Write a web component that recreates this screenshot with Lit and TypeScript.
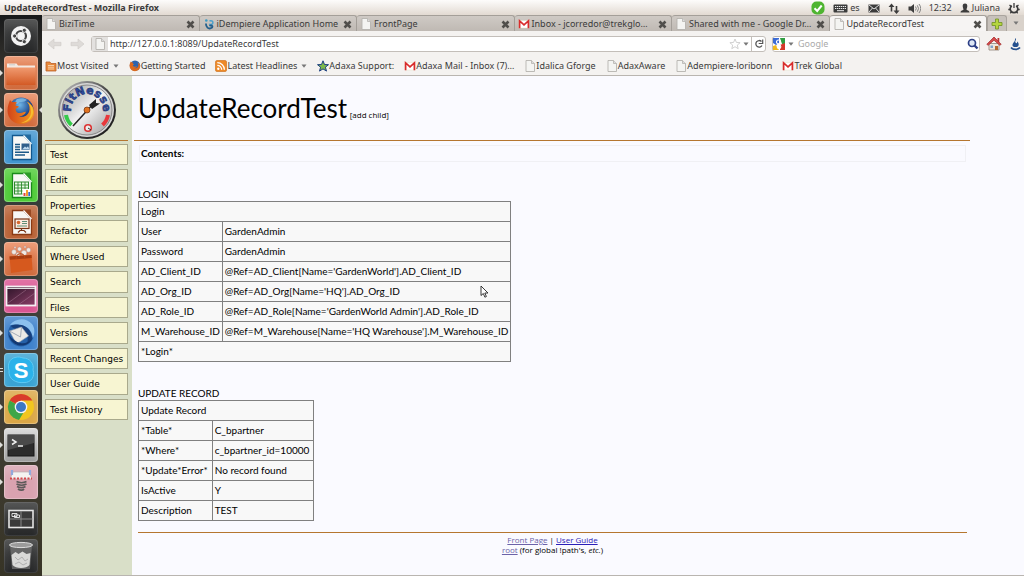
import { LitElement, html, css, svg, nothing, TemplateResult } from "lit";
import { customElement } from "lit/decorators.js";
import { classMap } from "lit/directives/class-map.js";

const pageIcon = html`<svg class="ic" viewBox="0 0 12 12"><path d="M2 .5h5.500L10.500 3.500v8H2z" fill="#f4f4f2" stroke="#b5b3af" stroke-width=".9"/><path d="M7.500.5v3h3" fill="#ddd" stroke="#b5b3af" stroke-width=".8"/></svg>`;
const mailIcon = html`<svg class="ic" viewBox="0 0 12 12"><path d="M1 2.500h10v7.500H1z" fill="#fff" stroke="#ddb" stroke-width=".4"/><path d="M1.600 10.300V2.800L6 6.800l4.400-4v7.500" fill="none" stroke="#d92c2c" stroke-width="1.700"/></svg>`;
const swirlIcon = html`<svg class="ic" viewBox="0 0 12 12"><path d="M6.500 3c2.500-.8 3.800.6 3.300 2.200S6.800 7 6.300 5.800" fill="none" stroke="#4aa0cc" stroke-width="1.500"/><path d="M3 5.500c-.3 3.500 2.500 6 5.200 4.500s.3-3.500-1.700-2" fill="none" stroke="#235f8c" stroke-width="1.800"/><circle cx="3.300" cy="2.500" r="1.300" fill="#3b9ac4"/></svg>`;
const folderIcon = html`<svg class="ic" viewBox="0 0 12 12"><path d="M1 2h4l1 1.500h5V11H1z" fill="#e88a3c" stroke="#b9602a" stroke-width=".8"/><path d="M3 5.500h6M3 7.200h6M3 9h6" stroke="#fbe0c2" stroke-width=".8"/></svg>`;
const rssIcon = html`<svg class="ic" viewBox="0 0 12 12"><rect x=".5" y=".5" width="11" height="11" rx="1.500" fill="#ee8a28" stroke="#c96a14" stroke-width=".6"/><circle cx="3.300" cy="8.700" r="1.200" fill="#fff"/><path d="M2.300 5.300a4.400 4.400 0 0 1 4.400 4.400M2.300 2.600a7.100 7.100 0 0 1 7.100 7.100" fill="none" stroke="#fff" stroke-width="1.300"/></svg>`;
const starIcon = html`<svg class="ic" viewBox="0 0 12 12"><path d="M6 .8l1.500 3.700 4 .2-3.100 2.500 1.100 3.900L6 8.900l-3.500 2.200 1.100-3.900L.5 4.700l4-.2z" fill="#7cb84a" stroke="#1d3f82" stroke-width="1"/></svg>`;

const foxPath = "M6 7c1 1 1.500 2 3 2.300 2-.8 3.500 0 4 .5-1.700.8-1.500 2-1.200 2.900l3 .6c0 1.500-2.800 1.900-3.200 3.100 0 2.500 2.400 4 5 3.600 2.300-.3 3.400-1.500 5.400-1.200-1 3-4 4.600-7 4.500 5 2 10-1.500 10.500-6.500.3-3.500-.8-6.300-2.500-8 4.500 2 7.500 6.400 7 11.200C29.500 27 23.500 31 17 31 9.500 31 3.500 25.300 3.500 17.500 3.500 13 5 10 6 7z";

const firefoxArt = svg`<circle cx="17" cy="17" r="12.500" fill="url(#globe)"/>
  <path d="M13 6c4-1.500 8-1 10 1-2 1-3 2-6 2s-2 2-4 2-2-3 0-5z" fill="#8cc4ea" opacity=".7"/>
  <path d=${foxPath} fill="url(#fox)"/>
  <path d="M23 9c4 2 7 6.500 6 11-1 6-6 10-12 10 7-2 10.500-7 10-12-.2-4-1.500-7-4-9z" fill="#f7c331" opacity=".9"/>`;

const docArt = (edge: string, body: TemplateResult) => svg`
  <path d="M8.500 5.500h11l8 8.500v15.500h-19z" fill="#f8f8f6" stroke="${edge}" stroke-width="1.300"/>
  <path d="M19.500 4.500h7.500v9z" fill="${edge}" opacity=".75"/><path d="M19.500 5.500l8 8.500" stroke="#fff" stroke-width="1.200"/>${body}`;

interface App { name: string; tile: string; mark?: string; art: TemplateResult }

const apps: App[] = [
  { name: "Dash home", tile: "dark", art: svg`<circle cx="17" cy="17" r="10" fill="#f3f3f3"/><circle cx="17" cy="17" r="5" fill="none" stroke="#444" stroke-width="2.200"/>
    <g fill="#444" stroke="#f3f3f3" stroke-width=".9"><circle cx="10.600" cy="17" r="2.100"/><circle cx="20.300" cy="11.300" r="2.100"/><circle cx="20.300" cy="22.700" r="2.100"/></g>` },
  { name: "Home Folder", tile: "orange", mark: "one", art: svg`<path d="M3 9V7.500h9.500l1.500 2h17V28H3z" fill="#f3e9e2"/><path d="M2.500 11.500h29V29h-29z" fill="url(#fold)"/><path d="M5 8.800h6" stroke="#ccc"/>` },
  { name: "Firefox Web Browser", tile: "orange", mark: "one active", art: firefoxArt },
  { name: "LibreOffice Writer", tile: "blue", art: docArt("#12588e", svg`<path d="M11 14.500h5M11 17h5M11 19.500h5M11 22.300h14M11 25h10" stroke="#1d5a88" stroke-width="1.400"/><rect x="17.500" y="13.500" width="8" height="6.500" fill="#305f8b"/><path d="M18 19.500l3-3 1.500 1.200 1.500-1.500 1.500 3.300z" fill="#bcd8ee"/>`) },
  { name: "LibreOffice Calc", tile: "green", mark: "one", art: docArt("#1a8a1a", svg`<rect x="10.500" y="14" width="14" height="12" fill="#e8f8e4" stroke="#2c8a2c"/><path d="M10.500 17h14M10.500 20h14M10.500 23h14M14 14v12M17.500 14v12M21 14v12" stroke="#2c8a2c" stroke-width=".9"/><path d="M18.500 21h7.500v7h-7.500z" fill="#fff"/><path d="M19.500 28v-3h2v3z" fill="#d44"/><path d="M22 28v-6h2v6z" fill="#f5a02c"/><path d="M24.300 28v-4h1.700v4z" fill="#36c"/>`) },
  { name: "LibreOffice Impress", tile: "brown", art: docArt("#8b3b14", svg`<rect x="11" y="14" width="14" height="9.500" fill="#fbeadf" stroke="#7a3415" stroke-width="1.200"/><circle cx="14.500" cy="17.500" r="1.800" fill="#d4682f"/><path d="M18 16.500h5M18 18.500h5M13 21h10" stroke="#5e8f77" stroke-width="1.100"/><path d="M17.500 23.500v2M14 27.500l2-2h4l2 2" fill="none" stroke="#7a3415" stroke-width="1.200"/>`) },
  { name: "Ubuntu Software Center", tile: "orange", mark: "one", art: svg`<g fill="#eee9e4" stroke="#a88" stroke-width=".4"><circle cx="10" cy="10" r="2.400"/><circle cx="15.500" cy="7" r="2"/><circle cx="20" cy="11" r="2.700"/><circle cx="24.500" cy="8" r="2.200"/><circle cx="14" cy="12.500" r="2"/><circle cx="11" cy="5.500" r="1"/><circle cx="21" cy="5" r="1"/></g><path d="M5.500 14.500l22-1.500 1 15-21.500 3z" fill="#d6591e"/><path d="M5.500 14.500l22-1.500.3 3-22 1.800z" fill="#a83c10"/><path d="M12 17c0-7 9-7 9 0" fill="none" stroke="#b84715" stroke-width="1.200"/>` },
  { name: "Shutter", tile: "pink", art: svg`<rect x="2.500" y="7.500" width="29" height="19" fill="url(#desk)" stroke="#f5f0f3" stroke-width="1.800"/><path d="M3 9.500h28" stroke="#ddd" stroke-width="1.200"/><path d="M4 24L22 11M14 26L31 14" stroke="#b788a4" stroke-width=".7" opacity=".6"/>` },
  { name: "Thunderbird Mail", tile: "steel", mark: "one", art: svg`<circle cx="17" cy="17.500" r="13" fill="#2560a8"/><path d="M6 9C11 2 22 1 28 8c3 4 3 9 1 14-1-5-3-9-7-11-6-3-11-2-16-2z" fill="#8cc0ee"/><path d="M7 10c4-2 10-2 15 1 4 3 6 7 6 11-1 3-3 5-5 6 2-6 0-11-5-13S9 13 7 10z" fill="#173f7c"/><path d="M5.500 15l12-4 7 9-12 8z" fill="#eceae6" stroke="#9ba6b5" stroke-width=".6"/><path d="M5.500 15l11 6 1-10" fill="none" stroke="#a4acb8"/><path d="M4.500 18c1 5 4 9 9 11 6 2 13-1 15-7-3 4-8 6-12 5s-9-4-12-9z" fill="#123872"/>` },
  { name: "Skype", tile: "sky", mark: "two", art: svg`<path d="M11 4.500c3-1 6-.3 8 .5 7 0 11.500 6 10 12 2.500 6-2 13-9 12.500C12 30.500 4 26 5 17.500 3 11 6 5.500 11 4.500z" fill="#2bb2ea" stroke="#6bd0f6" stroke-width=".8"/><text class="skype" x="17" y="25" text-anchor="middle">S</text>` },
  { name: "Google Chrome", tile: "gold", mark: "one", art: svg`<circle cx="17" cy="17" r="13" fill="#f2c51f"/><path d="M17 17L5.700 10.500A13 13 0 0 1 28.300 10.500H17z" fill="#d93a2c"/><path d="M17 17L5.700 10.500a13 13 0 0 0 9.300 19.400L21 20z" fill="#3fa648"/><circle cx="17" cy="17" r="6.300" fill="#f4f4f4"/><circle cx="17" cy="17" r="5" fill="#3b78c4"/>` },
  { name: "Terminal", tile: "silver", mark: "one", art: svg`<rect x="4" y="7" width="26" height="21" fill="#2c2c2c" stroke="#161616"/><path d="M4 7h26v8L4 22z" fill="#4a4a4a"/><path d="M8 11.500l4 2.500-4 2.500M14 18h5" fill="none" stroke="#eee" stroke-width="1.500"/>` },
  { name: "System Tools", tile: "rose", mark: "one", art: svg`<path d="M9 7h16l3 7H6z" fill="#f5f3f1" stroke="#b9b3b3" stroke-width=".7"/><path d="M6 13.500h22" stroke="#d6474d" stroke-width="1.800" stroke-dasharray="2 1.500"/><path d="M8 5v5M26 5v5" stroke="#93a9dc" stroke-width="2.200"/><path d="M12.500 16.500c3 1.500 7 1.500 10 0M12.500 19c3 1.500 7 1.500 10 0M13 21.500c3 1.500 6 1.500 8.500 0M14 24c2 1.500 5 1.500 6 0" fill="none" stroke="#5d5a5a" stroke-width="1.700"/>` },
  { name: "Workspace Switcher", tile: "dark", art: svg`<rect x="5" y="8.500" width="24" height="17" fill="#3a3a3a" stroke="#e4e4e4" stroke-width="1.600"/><path d="M17 9v16M5.500 17h23" stroke="#888"/><path d="M8 11.500h5v3H8zM10.500 13h5v2.500h-5z" fill="none" stroke="#eee" stroke-width=".9"/>` },
  { name: "Trash", tile: "dark", art: svg`<path d="M6 6l2 24h18l2-24z" fill="#777" opacity=".7"/><ellipse cx="17" cy="6" rx="11.500" ry="2.600" fill="#9b9b9b" stroke="#ddd"/><path d="M7.500 16l4-3 3 2 4-2.500 4 2.500 4-1-1 12c-3 4-14 4-17 0z" fill="#d9d9d7"/><path d="M11 18l3 3 4-3 3 4 3-2M11 25l4-2 4 3 4-2" fill="none" stroke="#aaa" stroke-width=".9"/>` },
];

@customElement("app-launcher")
class AppLauncher extends LitElement {
  static styles = css`
    :host { display: flex; flex-direction: column; justify-content: space-between; padding: 4px 4px 3px 0; box-sizing: border-box;
      background: linear-gradient(#17191a, #3f3b34 12%, #343d3a 40%, #45413a 60%, #373426); }
    .row { position: relative; display: flex; justify-content: flex-end; }
    .tile { width: 34px; height: 34px; padding: 0; border: 0; border-radius: 4px; display: block; overflow: hidden;
      box-shadow: inset 0 0 0 1px #ffffff40, inset 0 8px 8px #ffffff30; }
    .tile svg { display: block; width: 34px; height: 34px; }
    .dark { background: linear-gradient(#454646, #262728); box-shadow: inset 0 0 0 1px #ffffff18, inset 0 8px 8px #ffffff18; }
    .orange { background: linear-gradient(#e8875b, #cf6a3c); }
    .blue { background: #4295cf; } .green { background: #4fcc38; } .brown { background: #b96236; }
    .pink { background: #da5592; } .steel { background: #3f82cc; } .sky { background: #3aa3d3; }
    .gold { background: #dba747; } .silver { background: linear-gradient(#d4d4d4, #9c9c9c); } .rose { background: #d9a2b0; }
    .skype { font: bold 22px "Liberation Sans", sans-serif; fill: #fff; }
    .mark::before, .active::after { content: ""; position: absolute; top: 14px; border: 3px solid transparent; }
    .mark::before { left: 0; border-left-color: #dededa; border-right-width: 0; }
    .mark.two::before { top: 15px; width: 3px; height: 2px; border: solid #dededa; border-width: 1px 0; }
    .active::after { right: -4px; border-right-color: #dededa; border-left-width: 0; }
  `;
  render() {
    return apps.map((a) => html`<div class=${classMap({ row: true, mark: !!a.mark, two: a.mark === "two", active: a.mark === "one active" })}>
        <button class="tile ${a.tile}" aria-label=${a.name}><svg viewBox="0 0 34 34">
          <defs>
            <radialGradient id="globe" cx=".45" cy=".3"><stop offset="0" stop-color="#6fb7e8"/><stop offset="1" stop-color="#153a80"/></radialGradient>
            <linearGradient id="fox" x2="1"><stop offset="0" stop-color="#d2441a"/><stop offset="1" stop-color="#f59a20"/></linearGradient>
            <linearGradient id="fold" x2="0" y2="1"><stop offset="0" stop-color="#f09a70"/><stop offset="1" stop-color="#d35a25"/></linearGradient>
            <linearGradient id="desk" x2="1" y2="1"><stop offset="0" stop-color="#2c1428"/><stop offset="1" stop-color="#8d3f68"/></linearGradient>
          </defs>${a.art}</svg></button></div>`);
  }
}

@customElement("top-panel")
class TopPanel extends LitElement {
  static styles = css`
    :host { display: flex; align-items: center; height: 15px; padding: 0 4px; font: 9px/15px "Noto Sans", sans-serif; color: #3c3c3c;
      background: linear-gradient(#fdfcfb, #e2dad2); }
    .title { flex: 1; font-weight: bold; }
    .tray { display: flex; align-items: center; gap: 8px; }
    .pair { display: flex; align-items: center; gap: 2px; }
    svg { display: block; height: 14px; }
  `;
  render() {
    return html`<span class="title">UpdateRecordTest - Mozilla Firefox</span>
      <div class="tray">
        <svg viewBox="0 0 14 14"><rect x=".5" y=".5" width="13" height="13" rx="5" fill="#4fb531"/><path d="M3.500 7.300l2.700 2.700 4.500-5.500" fill="none" stroke="#fff" stroke-width="2"/></svg>
        <span class="pair"><svg viewBox="0 0 15 14"><rect x=".5" y="3.500" width="14" height="8" rx="1" fill="#3c3c3c"/><path d="M2 5.500h11M2 7.500h11" stroke="#eee" stroke-width="1.100" stroke-dasharray="1.300 .7"/><path d="M4 9.700h7" stroke="#eee"/></svg>es</span>
        <svg viewBox="0 0 12 14"><path d="M.5 3.500h11v8H.5z" fill="#3c3c3c"/><path d="M1 4l5 4 5-4M1 11l3.500-4M11 11L7.500 7" fill="none" stroke="#eee" stroke-width=".9"/></svg>
        <svg viewBox="0 0 12 14"><path d="M3.500 10.500V5M8.500 5v6" stroke="#3c3c3c" stroke-width="1.600"/><path d="M.5 6l3-3.500 3 3.500zM5.500 9.500l3 3.500 3-3.500z" fill="#3c3c3c"/></svg>
        <svg viewBox="0 0 13 14"><path d="M.5 5.500h2.500l3-2.500v9L3 9.500H.5z" fill="#3c3c3c"/><path d="M7.500 5.500q1.500 2 0 4M9.300 4.300q2.500 3.200 0 6.400M11 3q3.500 4.500 0 9" fill="none" stroke="#777" stroke-width=".9"/></svg>
        <span>12:32</span>
        <span class="pair"><svg viewBox="0 0 10 14"><path d="M5 2.500c1.800 0 2.400 1.200 2.300 2.700S6.500 8 6.500 8.500c0 .8 3 .8 3 3H.5c0-2.200 3-2.200 3-3C3.500 8 2.800 6.700 2.700 5.200S3.200 2.500 5 2.500z" fill="#3c3c3c"/></svg>Juliana</span>
        <svg viewBox="0 0 12 14"><path d="M3.800 4.800a3.800 3.800 0 1 0 4.400 0" fill="none" stroke="#3c3c3c" stroke-width="1.700"/><path d="M6 2v5M1.500 4l1.500 1.200M10.500 4L9 5.200M.3 8.500h1.700M10 8.500h1.700M2.300 12.300l1.300-1.500M9.700 12.300l-1.300-1.500" stroke="#3c3c3c" stroke-width="1.300"/></svg>
      </div>`;
  }
}

const tabs = [
  { icon: pageIcon, title: "BiziTime" },
  { icon: swirlIcon, title: "iDempiere Application Home" },
  { icon: pageIcon, title: "FrontPage" },
  { icon: mailIcon, title: "Inbox - jcorredor@trekglo…" },
  { icon: pageIcon, title: "Shared with me - Google Dr…" },
  { icon: pageIcon, title: "UpdateRecordTest", active: true },
];

const bookmarks = [
  { icon: folderIcon, title: "Most Visited", menu: true },
  { icon: html`<svg class="ic" viewBox="2 3 30 30"><circle cx="17" cy="17" r="13" fill="#2c64b0"/><path d=${foxPath} fill="#dd6a1e"/></svg>`, title: "Getting Started" },
  { icon: rssIcon, title: "Latest Headlines", menu: true },
  { icon: starIcon, title: "Adaxa Support:" },
  { icon: mailIcon, title: "Adaxa Mail - Inbox (7)…" },
  { icon: pageIcon, title: "Idalica Gforge" },
  { icon: pageIcon, title: "AdaxAware" },
  { icon: pageIcon, title: "Adempiere-loribonn" },
  { icon: mailIcon, title: "Trek Global" },
];

const caret = html`<svg class="caret" viewBox="0 0 6 4"><path d="M.5.5h5L3 3.700z" fill="#777"/></svg>`;

@customElement("browser-chrome")
class BrowserChrome extends LitElement {
  static styles = css`
    :host { display: block; font: 9px/14px "Noto Sans", sans-serif; color: #3a3a3a; background: #f4f2f0; border-bottom: 1px solid #b9b5b0; }
    button { border: 0; padding: 0; background: none; font: inherit; color: inherit; display: flex; align-items: center; }
    .ic { display: block; width: 12px; height: 12px; flex: none; }
    .caret { width: 6px; height: 4px; flex: none; display: block; }
    .tabs { display: flex; height: 16px; background: #d9d2cb; }
    .tab { flex: 1; min-width: 0; display: flex; align-items: center; gap: 2px; padding: 1px 4px 0 3px; box-sizing: border-box;
      background: linear-gradient(#cfcac5, #bfb9b3); border: solid #a49f99; border-width: 1px 1px 0 0; border-radius: 3px 3px 0 0; }
    .tab.active { background: #f6f4f3; }
    .tab .name { flex: 1; white-space: nowrap; }
    .close svg { display: block; width: 9px; height: 9px; }
    .new { width: 20px; justify-content: center; background: #c7c1bb; border: 1px solid #aaa49e; border-bottom: 0; border-radius: 3px 3px 0 0; }
    .list { width: 17px; justify-content: center; }
    .nav { display: flex; align-items: center; height: 24px; padding: 1px 3px 0 5px; box-sizing: border-box; gap: 6px; }
    .hist { display: flex; gap: 8px; }
    .hist svg { width: 15px; height: 12px; display: block; }
    .field { display: flex; align-items: center; height: 14px; background: #fff; border: 1px solid #c3beb9; border-radius: 3px; gap: 4px; }
    .url { flex: 1; gap: 2px; }
    .site { width: 16px; height: 14px; justify-content: center; background: #e3e1df; }
    input { flex: 1; min-width: 0; width: 0; border: 0; outline: 0; padding: 0; background: none; font: inherit; color: #3a3a3a; height: 14px; }
    input::placeholder { color: #aaa; opacity: 1; }
    .reload { border-left: 1px solid #c3beb9; height: 14px; width: 14px; justify-content: center; }
    .search { width: 206px; }
    .google { gap: 3px; }
    .home svg { width: 16px; height: 15px; }
    .flame { margin-left: 2px; } .flame svg { width: 11px; height: 14px; }
    .marks { display: flex; align-items: center; gap: 10px; height: 20px; padding: 1px 3px 0; box-sizing: border-box; }
    .marks a { display: flex; align-items: center; color: inherit; text-decoration: none; white-space: nowrap; }
    .marks .caret { margin-left: 4px; }
  `;
  render() {
    return html`
      <div class="tabs" role="tablist">
        ${tabs.map((t) => html`<div role="tab" class=${classMap({ tab: true, active: !!t.active })}>${t.icon}<span class="name">${t.title}</span>
          <button class="close" aria-label="Close tab"><svg viewBox="0 0 9 9"><path d="M1.500 1.500l6 6M7.500 1.500l-6 6" stroke="#504e4b" stroke-width="2.600"/></svg></button></div>`)}
        <button class="new" aria-label="New tab"><svg class="ic" viewBox="0 0 12 12"><path d="M4.500 1h3v3.500H11v3H7.500V11h-3V7.500H1v-3h3.500z" fill="#b5d53f" stroke="#77952a" stroke-width=".9"/></svg></button>
        <button class="list" aria-label="List tabs">${caret}</button>
      </div>
      <div class="nav">
        <div class="hist">
          <button aria-label="Back"><svg viewBox="0 0 15 12"><path d="M1 6l6-5v3.300h7v3.400H7V11z" fill="#dedbd8" stroke="#cfcbc7" stroke-width=".6"/></svg></button>
          <button aria-label="Forward"><svg viewBox="0 0 15 12"><path d="M14 6L8 1v3.300H1v3.400h7V11z" fill="#dedbd8" stroke="#cfcbc7" stroke-width=".6"/></svg></button>
        </div>
        <div class="field url">
          <button class="site" aria-label="Site information">${pageIcon}</button>
          <input aria-label="Address" .value=${"http://127.0.0.1:8089/UpdateRecordTest"} />
          <button aria-label="Bookmark"><svg class="ic" viewBox="0 0 12 12"><path d="M6 1l1.400 3.400 3.700.3-2.800 2.400.9 3.600L6 8.700l-3.200 2 .9-3.600L.9 4.700l3.700-.3z" fill="#fff" stroke="#c5c5c5" stroke-width=".8"/></svg></button>
          <button aria-label="History">${caret}</button>
          <button class="reload" aria-label="Reload"><svg class="ic" viewBox="0 0 12 12"><path d="M8.500 3.500A3.300 3.300 0 1 0 9 7.500" fill="none" stroke="#555" stroke-width="1.300"/><path d="M9.700 1.500v4h-4" fill="none" stroke="#555" stroke-width="1.200"/></svg></button>
        </div>
        <div class="field search">
          <button class="google" aria-label="Search engine"><svg class="ic" viewBox="0 0 12 12"><path d="M1 1h10v10H1z" fill="#fff"/><path d="M0 0h6v5L3 7 0 5z" fill="#3a6bd6"/><path d="M7 0h5v6H9z" fill="#2f9e41"/><path d="M0 8l3-1 3 5H0z" fill="#f1b91d"/><path d="M7 7l5-2v7H7z" fill="#d5382b"/><circle cx="5.500" cy="4" r="2" fill="none" stroke="#fff" stroke-width="1.200"/><circle cx="6" cy="8.800" r="1.800" fill="none" stroke="#fff" stroke-width="1.200"/></svg>${caret}</button>
          <input aria-label="Search" placeholder="Google" />
          <button aria-label="Search"><svg class="ic" viewBox="0 0 12 12"><circle cx="5" cy="5" r="3.500" fill="#dce6f5" stroke="#2c3f86" stroke-width="1.700"/><path d="M7.500 7.500l3 3" stroke="#2c3f86" stroke-width="2.400"/></svg></button>
        </div>
        <button class="home" aria-label="Home"><svg viewBox="0 0 16 15"><path d="M3 7.500h10V14H3z" fill="#eee6dc" stroke="#8f8478" stroke-width=".8"/><path d="M9 10h3v4H9z" fill="#b5682f"/><path d="M4.500 9.500H7V12H4.500z" fill="#7fa2c9"/><path d="M11.500 2h1.800v4h-1.800z" fill="#b33"/><path d="M8 1L.8 8.300l1.400 1L8 4.200l5.800 5.100 1.400-1z" fill="#d9494b" stroke="#9c2a2a" stroke-width=".7"/></svg></button>
        <button class="flame" aria-label="Add-on"><svg viewBox="0 0 11 14"><path d="M5.500 1c1.500 2-1 3 0 4.500s2 .5 1.500-1c2 1 2.500 4.500 0 5.500H4C1.500 9 2.500 6.500 4 5S4.500 2.500 5.500 1z" fill="#24508e"/><path d="M1 10.500c2 2.500 7 2.500 9 0" fill="none" stroke="#24508e" stroke-width="1.800"/></svg></button>
      </div>
      <nav class="marks">${bookmarks.map((b) => html`<a href="#">${b.icon}${b.title}${b.menu ? caret : nothing}</a>`)}</nav>`;
  }
}

const actions = ["Test", "Edit", "Properties", "Refactor", "Where Used", "Search", "Files", "Versions", "Recent Changes", "User Guide", "Test History"];

@customElement("wiki-sidebar")
class WikiSidebar extends LitElement {
  static styles = css`
    :host { display: block; background: #d9dfc8; padding: 4px 4px 0 3px; box-sizing: border-box; font: 9px/18px "DejaVu Sans", sans-serif; }
    .logo { display: block; width: 60px; height: 60px; margin: 0 auto; }
    .brand { font: 900 11px "DejaVu Sans", sans-serif; fill: #2e4b9c; stroke: #182a66; stroke-width: .5; }
    .actions { display: grid; grid-auto-rows: 1fr; gap: 4px; min-height: 276px; padding-top: 3px; border-top: 1px solid #b5762f; }
    .actions a { display: block; color: #000; text-decoration: none; background: #f7f5d2; border: 1px solid #a9a98c; padding: 1px 4px 0; white-space: nowrap; }
  `;
  render() {
    return html`
      <svg class="logo" viewBox="0 0 60 60" role="img" aria-label="FitNesse">
        <defs><linearGradient id="rim" x2="1" y2="1"><stop offset="0" stop-color="#ccc"/><stop offset=".5" stop-color="#444"/><stop offset="1" stop-color="#111"/></linearGradient>
          <linearGradient id="face" x2="1" y2="1"><stop offset="0" stop-color="#999"/><stop offset=".5" stop-color="#f2f2f2"/><stop offset="1" stop-color="#999"/></linearGradient>
          <path id="arc" d="M14 30A16 16 0 1 1 46 30"/></defs>
        <circle cx="30" cy="30" r="29" fill="url(#rim)"/><circle cx="30" cy="30" r="27" fill="#d8d8d8"/><circle cx="30" cy="30" r="25" fill="url(#face)" stroke="#777" stroke-width=".8"/>
        <path d="M9 35q1 6 5.500 10" fill="none" stroke="#34c94a" stroke-width="4"/><path d="M51 35q-1 6-5.500 10" fill="none" stroke="#e8383c" stroke-width="4"/>
        <text class="brand"><textPath href="#arc" startOffset="50%" text-anchor="middle">FitNesse</textPath></text>
        <path d="M16 46L37 23" stroke="#222" stroke-width="1.500"/><path d="M32 25l7-6v4l4 .5-8 5.500z" fill="#222"/>
        <circle cx="30" cy="30" r="3" fill="#e2731f" stroke="#6a2c0a" stroke-width=".7"/>
        <circle cx="31" cy="48" r="3.300" fill="#eee" stroke="#d33" stroke-width="1.600"/><path d="M31 48l3 2" stroke="#333"/>
      </svg>
      <nav class="actions">${actions.map((a) => html`<a href="#">${a}</a>`)}</nav>`;
  }
}

const loginRows: string[][] = [
  ["Login"], ["User", "GardenAdmin"], ["Password", "GardenAdmin"],
  ["AD_Client_ID", "@Ref=AD_Client[Name='GardenWorld'].AD_Client_ID"],
  ["AD_Org_ID", "@Ref=AD_Org[Name='HQ'].AD_Org_ID"],
  ["AD_Role_ID", "@Ref=AD_Role[Name='GardenWorld Admin'].AD_Role_ID"],
  ["M_Warehouse_ID", "@Ref=M_Warehouse[Name='HQ Warehouse'].M_Warehouse_ID"],
  ["*Login*"],
];
const updateRows: string[][] = [
  ["Update Record"], ["*Table*", "C_bpartner"], ["*Where*", "c_bpartner_id=10000"],
  ["*Update*Error*", "No record found"], ["IsActive", "Y"], ["Description", "TEST"],
];

@customElement("wiki-page")
class WikiPage extends LitElement {
  static styles = css`
    :host { display: block; position: relative; background: #fafaff; color: #000; padding: 0 54px 0 2px; font: 10px/15px Lato, sans-serif; }
    header { padding: 15px 4px; border-bottom: 1px solid #b5762f; }
    h1 { display: inline; margin: 0; font: 26px/34px Lato, sans-serif; }
    .add { font: 8px/15px "Open Sans", sans-serif; color: #000; text-decoration: none; }
    .body { padding: 4px 4px 0; }
    .toc { border: 1px solid #f0f0f4; padding: 0 1px; margin: 0 0 26px 1px; font-weight: bold; }
    table { border-collapse: collapse; margin-bottom: 25px; }
    caption { text-align: left; line-height: 13px; white-space: nowrap; }
    td { border: 1px solid #808080; background: #f8f8f8; padding: 2px; white-space: nowrap; }
    .roomy td { padding-right: 4px; }
    .roomy { margin-bottom: 11px; }
    footer { margin: 0 3px 0 4px; padding-top: 2px; border-top: 1px solid #b5762f; text-align: center; font: 8px/10px "Open Sans", sans-serif; }
    footer a { color: #2a20b8; } footer a.seen { color: #6b62a8; }
    .pointer { position: absolute; left: 348px; top: 209px; width: 9px; height: 13px; }
  `;
  table(caption: string, rows: string[][], roomy = false) {
    return html`<table class=${classMap({ roomy })}><caption>${caption}</caption><tbody>${rows.map((r) => html`<tr>${r.map((c) => html`<td colspan=${r.length === 1 ? 2 : 1}>${c}</td>`)}</tr>`)}</tbody></table>`;
  }
  render() {
    return html`
      <header><h1>UpdateRecordTest</h1> <a class="add" href="#">[add child]</a></header>
      <div class="body">
        <div class="toc">Contents:</div>
        ${this.table("LOGIN", loginRows)}
        ${this.table("UPDATE RECORD", updateRows, true)}
      </div>
      <footer><a class="seen" href="#">Front Page</a> | <a href="#">User Guide</a><br /><a class="seen" href="#">root</a> (for global !path's, <i>etc.</i>)</footer>
      <svg class="pointer" viewBox="0 0 9 13"><path d="M1 1v9.500l2.300-2 1.600 3.700 1.500-.7-1.600-3.500H8z" fill="#fff" stroke="#222" stroke-width=".9"/></svg>`;
  }
}

@customElement("app-root")
class AppRoot extends LitElement {
  static styles = css`
    :host { display: flex; flex-direction: column; min-height: 100vh; }
    .desktop { flex: 1; display: grid; grid-template-columns: 42px 1fr; }
    .window { display: flex; flex-direction: column; min-width: 0; }
    .view { flex: 1; display: grid; grid-template-columns: 90px 1fr; border-bottom: 1px solid #b9b5b0; }
  `;
  render() {
    return html`<top-panel></top-panel>
      <div class="desktop"><app-launcher></app-launcher>
        <div class="window"><browser-chrome></browser-chrome>
          <div class="view"><wiki-sidebar></wiki-sidebar><wiki-page></wiki-page></div>
        </div>
      </div>`;
  }
}
